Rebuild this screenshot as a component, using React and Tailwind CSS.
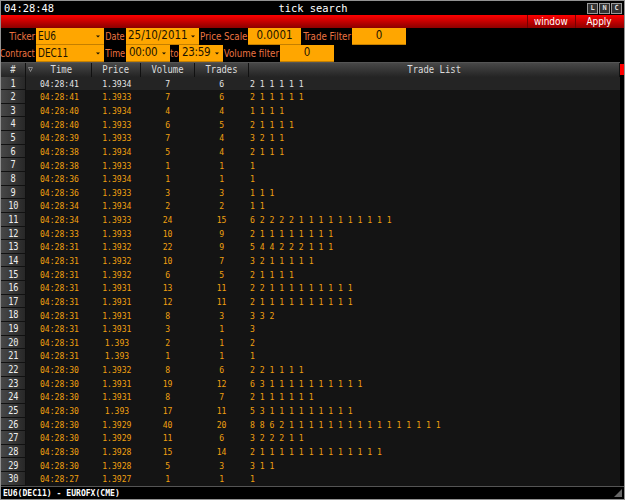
import React, { useState } from "react";
import clsx from "clsx";

// [time, price, volume, trades, trade list]
const ticks = [
  ["04:28:41", "1.3934", 7, 6, "2 1 1 1 1 1"],
  ["04:28:41", "1.3933", 7, 6, "2 1 1 1 1 1"],
  ["04:28:40", "1.3934", 4, 4, "1 1 1 1"],
  ["04:28:40", "1.3933", 6, 5, "2 1 1 1 1"],
  ["04:28:39", "1.3933", 7, 4, "3 2 1 1"],
  ["04:28:38", "1.3934", 5, 4, "2 1 1 1"],
  ["04:28:38", "1.3933", 1, 1, "1"],
  ["04:28:36", "1.3934", 1, 1, "1"],
  ["04:28:36", "1.3933", 3, 3, "1 1 1"],
  ["04:28:34", "1.3934", 2, 2, "1 1"],
  ["04:28:34", "1.3933", 24, 15, "6 2 2 2 2 1 1 1 1 1 1 1 1 1 1"],
  ["04:28:33", "1.3933", 10, 9, "2 1 1 1 1 1 1 1 1"],
  ["04:28:31", "1.3932", 22, 9, "5 4 4 2 2 2 1 1 1"],
  ["04:28:31", "1.3932", 10, 7, "3 2 1 1 1 1 1"],
  ["04:28:31", "1.3932", 6, 5, "2 1 1 1 1"],
  ["04:28:31", "1.3931", 13, 11, "2 2 1 1 1 1 1 1 1 1 1"],
  ["04:28:31", "1.3931", 12, 11, "2 1 1 1 1 1 1 1 1 1 1"],
  ["04:28:31", "1.3931", 8, 3, "3 3 2"],
  ["04:28:31", "1.3931", 3, 1, "3"],
  ["04:28:31", "1.393", 2, 1, "2"],
  ["04:28:31", "1.393", 1, 1, "1"],
  ["04:28:30", "1.3932", 8, 6, "2 2 1 1 1 1"],
  ["04:28:30", "1.3931", 19, 12, "6 3 1 1 1 1 1 1 1 1 1 1"],
  ["04:28:30", "1.3931", 8, 7, "2 1 1 1 1 1 1"],
  ["04:28:30", "1.393", 17, 11, "5 3 1 1 1 1 1 1 1 1 1"],
  ["04:28:30", "1.3929", 40, 20, "8 8 6 2 1 1 1 1 1 1 1 1 1 1 1 1 1 1 1 1"],
  ["04:28:30", "1.3929", 11, 6, "3 2 2 2 1 1"],
  ["04:28:30", "1.3928", 15, 14, "2 1 1 1 1 1 1 1 1 1 1 1 1 1"],
  ["04:28:30", "1.3928", 5, 3, "3 1 1"],
  ["04:28:27", "1.3927", 1, 1, "1"],
];

const columns = "grid grid-cols-[25px_66px_49px_54px_54px_1fr]";

function Label({ className, narrow, children }) {
  return (
    <div className={clsx("flex items-center justify-end whitespace-nowrap text-[10.5px] text-[#ec7440]", className)}>
      <span className={clsx("inline-block origin-right", narrow ? "scale-x-[0.86]" : "scale-x-[0.92]")}>{children}</span>
    </div>
  );
}

function Field({ className, select, narrow, children }) {
  return (
    <button
      className={clsx(
        "flex h-[17px] items-center whitespace-nowrap border-b border-[#c47f00] bg-[#ffa600] text-[#1c1400]",
        narrow ? "text-[12px]" : "text-[11.5px]",
        select ? "justify-between pr-[4px]" : "justify-center",
        className
      )}
    >
      <span className={clsx("inline-block origin-left", narrow && "scale-x-[0.83]")}>{children}</span>
      {select && (
        <svg width="4" height="3" viewBox="0 0 4 3" className="shrink-0">
          <path d="M0 0.5h4L2 2.5z" fill="#1c1400" />
        </svg>
      )}
    </button>
  );
}

function HeaderCell({ icon, children }) {
  return (
    <div className="relative flex items-center justify-center border-r border-[#111] text-[#ddd]">
      {icon}
      <span className="inline-block scale-x-[0.92]">{children}</span>
    </div>
  );
}

function Cell({ children }) {
  return (
    <div className="flex items-center justify-center">
      <span className="inline-block scale-x-[0.87]">{children}</span>
    </div>
  );
}

const sortIcon = (
  <svg width="5" height="5" viewBox="0 0 5 5" className="absolute left-[2px] top-[4px]">
    <path d="M0.5 0.5h4L2.5 4.5z" fill="none" stroke="#aaa" strokeWidth="0.7" />
  </svg>
);

export default function App() {
  const [selected, setSelected] = useState(0);

  return (
    <div className="flex h-[500px] w-[625px] flex-col overflow-hidden border border-[#929292] bg-black font-['DejaVu_Sans_Condensed','DejaVu_Sans',sans-serif] leading-none">
      {/* Title bar */}
      <header className="grid h-[14px] shrink-0 grid-cols-[1fr_auto_1fr] items-center pl-[3px] pr-[2px] font-['DejaVu_Sans_Mono',monospace] text-[10.4px] text-white">
        <span>04:28:48</span>
        <h1 className="pt-[1px]">tick search</h1>
        <div className="flex justify-end gap-[1px] pt-[1px]">
          {["L", "N", "C"].map((key) => (
            <button
              key={key}
              className="flex h-[11px] w-[11px] items-center justify-center border border-[#999] bg-[#333] text-[7px] font-bold text-[#ddd]"
            >
              {key}
            </button>
          ))}
        </div>
      </header>

      {/* Actions */}
      <div className="flex h-[13px] shrink-0 justify-end bg-linear-to-b from-[#ff0000] to-[#8c0000] text-[11px] text-white">
        <button className="w-[48px] border-l border-[#750000] pr-[2px]">
          <span className="inline-block scale-x-[0.9]">window</span>
        </button>
        <button className="w-[49px] border-l border-[#750000] pr-[2px]">
          <span className="inline-block scale-x-[0.9]">Apply</span>
        </button>
      </div>

      {/* Filters */}
      <div className="flex h-[34px] shrink-0 flex-col">
        <div className="flex">
          <Label className="w-[34px]">Ticker</Label>
          <Field select narrow className="ml-px w-[68px] pl-[2px]">EU6</Field>
          <Label narrow className="w-[21px]">Date</Label>
          <Field select className="ml-px w-[73px] pl-[2px]">25/10/2011</Field>
          <Label className="w-[48px]">Price Scale</Label>
          <Field className="ml-px w-[53px]">0.0001</Field>
          <Label className="w-[50px]">Trade Filter</Label>
          <Field className="ml-px w-[54px]">0</Field>
        </div>
        <div className="flex">
          <Label narrow className="w-[34px]">Contract</Label>
          <Field select narrow className="ml-px w-[68px] pl-[2px]">DEC11</Field>
          <Label narrow className="w-[21px]">Time</Label>
          <Field select className="ml-px w-[44px] pl-[3px] tracking-[-0.3px]">00:00</Field>
          <Label narrow className="w-[8px]">to</Label>
          <Field select className="ml-px w-[44px] pl-[3px] tracking-[-0.3px]">23:59</Field>
          <Label className="w-[56px]">Volume filter</Label>
          <Field className="ml-px w-[54px]">0</Field>
        </div>
      </div>

      {/* Ticks */}
      <main className="flex h-[424px] shrink-0 font-['DejaVu_Sans_Mono',monospace]">
        <div className="flex w-[619px] flex-col">
          <div className={clsx(columns, "h-[14.5px] shrink-0 border-t border-[#555] bg-linear-to-b from-[#484848] to-[#242424] text-[9.7px]")}>
            <HeaderCell>#</HeaderCell>
            <HeaderCell icon={sortIcon}>&nbsp;Time</HeaderCell>
            <HeaderCell>Price</HeaderCell>
            <HeaderCell>Volume</HeaderCell>
            <HeaderCell>Trades</HeaderCell>
            <HeaderCell>Trade List</HeaderCell>
          </div>
          <div className="flex flex-1 flex-col">
            {ticks.map(([time, price, volume, trades, list], i) => (
              <div
                key={i}
                onClick={() => setSelected(i)}
                className={clsx(
                  columns,
                  "h-[13.65px] shrink-0 text-[9.3px]",
                  i === selected ? "bg-[#242424] text-[#e4e4e4]" : "bg-[#141414] text-[#f0a010]"
                )}
              >
                <div className="flex items-center justify-center border-b border-r border-[#111] bg-linear-to-r from-[#484848] to-[#282828] text-[10.5px] text-[#eee]">
                  <span className="inline-block scale-x-[0.82]">{i + 1}</span>
                </div>
                <Cell>{time}</Cell>
                <Cell>{price}</Cell>
                <Cell>{volume}</Cell>
                <Cell>{trades}</Cell>
                <div className="flex items-center whitespace-nowrap pl-[1px]">
                  <span className="inline-block origin-left scale-x-[0.873]">{list}</span>
                </div>
              </div>
            ))}
          </div>
        </div>
        <div className="w-[4px] pt-[2px]">
          <div className="h-[11px] bg-[#ff0000]" />
        </div>
      </main>

      {/* Status bar */}
      <footer className="flex h-[13px] shrink-0 items-center justify-between border-t border-[#555] pl-[2px] pr-[2px] font-['DejaVu_Sans_Mono',monospace] text-[9.2px] font-bold text-white">
        <span className="inline-block origin-left scale-x-[0.88]">EU6(DEC11) - EUROFX(CME)</span>
        <svg width="8" height="8" viewBox="0 0 8 8">
          <path d="M8 0v8H0z" fill="#666" />
        </svg>
      </footer>
    </div>
  );
}
